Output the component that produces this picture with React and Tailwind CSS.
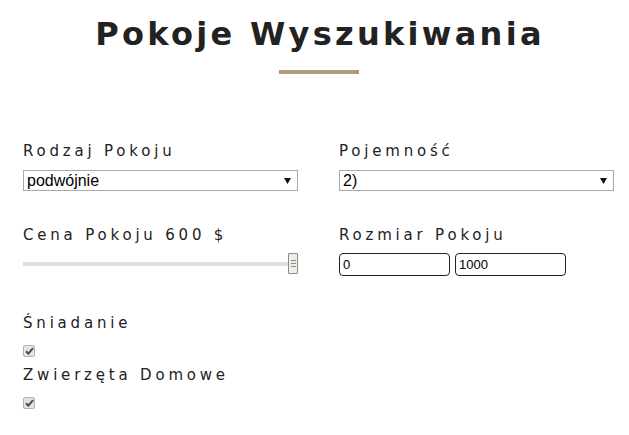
import React from 'react'

function Label({ children }) {
  return (
    <div className="text-[15px] leading-[20px] tracking-[3.8px] text-[#222]">{children}</div>
  )
}

function FakeSelect({ value }) {
  return (
    <div className="mt-[9px] flex h-[21px] items-center justify-between border border-[#a9a9a9] bg-white pl-[3px] pr-[6px] font-['Liberation_Sans',Arial,sans-serif] text-[16px] leading-none text-black">
      <span>{value}</span>
      <svg width="7" height="6" viewBox="0 0 7 6">
        <polygon points="0,0 7,0 3.5,6" fill="#111" />
      </svg>
    </div>
  )
}

function Check() {
  return (
    <div className="flex h-[12px] w-[12px] items-center justify-center rounded-[2px] border border-[#b3b3b3] bg-[#e4e4e4]">
      <svg width="9" height="8" viewBox="0 0 9 8">
        <path d="M1 4.2 L3.4 6.6 L8 1.2" fill="none" stroke="#4a4a4a" strokeWidth="2" />
      </svg>
    </div>
  )
}

export default function App() {
  return (
    <div className="min-h-screen bg-white pl-[23px] pr-[15px] font-['DejaVu_Sans',Verdana,sans-serif] text-[#222]">
      {/* naglowek */}
      <h1 className="mt-[14px] pl-[3px] text-center text-[32px] font-bold leading-[40px] tracking-[3.3px] text-[#222]">
        Pokoje Wyszukiwania
      </h1>
      <div className="mx-auto mt-[16px] h-[4px] w-[80px] bg-[#ae9b7c]" />

      {/* filtry */}
      <div className="mt-[67px] grid grid-cols-[275px_275px] gap-x-[41px]">
        <div className="flex flex-col">
          <Label>Rodzaj Pokoju</Label>
          <FakeSelect value="podwójnie" />
          <div className="mt-[34px]">
            <Label>Cena Pokoju 600 $</Label>
          </div>
          <div className="mt-[8px] flex h-[21px] items-center">
            <div className="h-[4px] w-[266px] bg-[#e2ded8]" />
            <div className="-ml-[1px] flex h-[21px] w-[10px] flex-col items-center justify-center gap-[2px] rounded-[1px] border border-[#8f8a84] bg-[#efedea]">
              <div className="h-px w-[5px] bg-[#8f8a84]" />
              <div className="h-px w-[5px] bg-[#8f8a84]" />
              <div className="h-px w-[5px] bg-[#8f8a84]" />
            </div>
          </div>
        </div>

        <div className="flex flex-col">
          <Label>Pojemność</Label>
          <FakeSelect value="2)" />
          <div className="mt-[34px]">
            <Label>Rozmiar Pokoju</Label>
          </div>
          <div className="mt-[8px] flex gap-[5px]">
            <input
              readOnly
              value="0"
              className="h-[23px] w-[111px] rounded-[4px] border border-[#222] px-[3px] font-['Liberation_Sans',Arial,sans-serif] text-[13px] text-black outline-none"
            />
            <input
              readOnly
              value="1000"
              className="h-[23px] w-[111px] rounded-[4px] border border-[#222] px-[3px] font-['Liberation_Sans',Arial,sans-serif] text-[13px] text-black outline-none"
            />
          </div>
        </div>
      </div>

      {/* dodatki */}
      <div className="mt-[37px] flex flex-col items-start">
        <Label>Śniadanie</Label>
        <div className="mt-[12px]">
          <Check />
        </div>
        <div className="mt-[8px]">
          <Label>Zwierzęta Domowe</Label>
        </div>
        <div className="mt-[12px]">
          <Check />
        </div>
      </div>
    </div>
  )
}
